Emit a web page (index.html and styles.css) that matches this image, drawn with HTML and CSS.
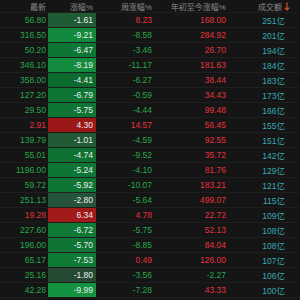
FILE: index.html
```html
<!DOCTYPE html>
<html lang="zh">
<head>
<meta charset="utf-8">
<link rel="stylesheet" href="styles.css">
</head>
<body>
<div class="table">
  <div class="row head">
    <div class="c c1">最新</div>
    <div class="c c2">涨幅%</div>
    <div class="c c3">周涨幅%</div>
    <div class="c c4">年初至今涨幅%</div>
    <div class="c c5">成交额<svg class="arrow" width="6" height="9" viewBox="0 0 6 9"><path d="M3 0.5V8M0.8 5.6L3 8L5.2 5.6" fill="none" stroke="#e8552a" stroke-width="1.1"/></svg></div>
  </div>
  <div class="row"><div class="c c1 g">56.80</div><div class="c c2" style="background:#1f5c35">-1.61</div><div class="c c3 r">8.23</div><div class="c c4 r">168.00</div><div class="c c5 t">251亿</div></div>
  <div class="row"><div class="c c1 g">316.50</div><div class="c c2" style="background:#128a3d">-9.21</div><div class="c c3 g">-8.58</div><div class="c c4 r">284.92</div><div class="c c5 t">201亿</div></div>
  <div class="row"><div class="c c1 g">50.20</div><div class="c c2" style="background:#0e7634">-6.47</div><div class="c c3 g">-3.46</div><div class="c c4 r">26.70</div><div class="c c5 t">194亿</div></div>
  <div class="row"><div class="c c1 g">346.10</div><div class="c c2" style="background:#138b3e">-8.19</div><div class="c c3 g">-11.17</div><div class="c c4 r">181.63</div><div class="c c5 t">184亿</div></div>
  <div class="row"><div class="c c1 g">358.00</div><div class="c c2" style="background:#0b6a2d">-4.41</div><div class="c c3 g">-6.27</div><div class="c c4 r">38.44</div><div class="c c5 t">183亿</div></div>
  <div class="row"><div class="c c1 g">127.20</div><div class="c c2" style="background:#0f7535">-6.79</div><div class="c c3 g">-0.59</div><div class="c c4 r">34.43</div><div class="c c5 t">173亿</div></div>
  <div class="row"><div class="c c1 g">29.50</div><div class="c c2" style="background:#0f7535">-5.75</div><div class="c c3 g">-4.44</div><div class="c c4 r">99.48</div><div class="c c5 t">166亿</div></div>
  <div class="row"><div class="c c1 r">2.91</div><div class="c c2" style="background:#9a1818">4.30</div><div class="c c3 r">14.57</div><div class="c c4 r">56.45</div><div class="c c5 t">155亿</div></div>
  <div class="row"><div class="c c1 g">139.79</div><div class="c c2" style="background:#1f5a35">-1.01</div><div class="c c3 g">-4.59</div><div class="c c4 r">92.55</div><div class="c c5 t">151亿</div></div>
  <div class="row"><div class="c c1 g">55.01</div><div class="c c2" style="background:#0e7131">-4.74</div><div class="c c3 g">-9.52</div><div class="c c4 r">35.72</div><div class="c c5 t">142亿</div></div>
  <div class="row"><div class="c c1 g">1196.00</div><div class="c c2" style="background:#0f7535">-5.24</div><div class="c c3 g">-4.10</div><div class="c c4 r">81.76</div><div class="c c5 t">129亿</div></div>
  <div class="row"><div class="c c1 g">59.72</div><div class="c c2" style="background:#0f7535">-5.92</div><div class="c c3 g">-10.07</div><div class="c c4 r">183.21</div><div class="c c5 t">121亿</div></div>
  <div class="row"><div class="c c1 g">251.13</div><div class="c c2" style="background:#25543a">-2.80</div><div class="c c3 g">-5.64</div><div class="c c4 r">499.07</div><div class="c c5 t">115亿</div></div>
  <div class="row"><div class="c c1 r">19.28</div><div class="c c2" style="background:#a21a1a">6.34</div><div class="c c3 r">4.78</div><div class="c c4 r">22.72</div><div class="c c5 t">109亿</div></div>
  <div class="row"><div class="c c1 g">227.60</div><div class="c c2" style="background:#0f7a36">-6.72</div><div class="c c3 g">-5.75</div><div class="c c4 r">52.13</div><div class="c c5 t">108亿</div></div>
  <div class="row"><div class="c c1 g">196.00</div><div class="c c2" style="background:#0f7435">-5.70</div><div class="c c3 g">-8.85</div><div class="c c4 r">84.04</div><div class="c c5 t">108亿</div></div>
  <div class="row"><div class="c c1 g">65.17</div><div class="c c2" style="background:#0f7a36">-7.53</div><div class="c c3 r">0.49</div><div class="c c4 r">126.00</div><div class="c c5 t">107亿</div></div>
  <div class="row"><div class="c c1 g">25.16</div><div class="c c2" style="background:#264a31">-1.80</div><div class="c c3 g">-3.56</div><div class="c c4 g">-2.27</div><div class="c c5 t">106亿</div></div>
  <div class="row"><div class="c c1 g">42.28</div><div class="c c2" style="background:#13923f">-9.99</div><div class="c c3 g">-7.28</div><div class="c c4 r">43.33</div><div class="c c5 t">100亿</div></div>
</div>
</body>
</html>
```
FILE: styles.css
```css
html, body {
  margin: 0;
  padding: 0;
  background: #151515;
}
body {
  width: 300px;
  height: 300px;
  overflow: hidden;
  font-family: "Liberation Sans", "Noto Sans CJK SC", sans-serif;
  font-size: 8.5px;
  color: #e6e6e6;
}
.table {
  display: flex;
  flex-direction: column;
}
.row {
  display: grid;
  grid-template-columns: 48px 48px 59px 73px 72px;
  height: 14px;
  border-bottom: 1px solid #1e1e1e;
}
.row.head {
  height: 12px;
  border-bottom: 1px solid #1e1e1e;
}
.c {
  display: flex;
  align-items: center;
  justify-content: flex-end;
  white-space: nowrap;
}
.c1 { padding-right: 2px; }
.c2 { padding-right: 3px; color: #ececec; }
.c3 { padding-right: 3px; }
.c4 { padding-right: 2px; }
.c5 { padding-right: 15px; }
.head .c {
  color: #8b8b8b;
  font-size: 8px;
}
.head .c5 { padding-right: 10px; }
.arrow { margin-left: 2px; }
.g { color: #25a84a; }
.r { color: #e5333d; }
.t { color: #3aaab3; }
```
